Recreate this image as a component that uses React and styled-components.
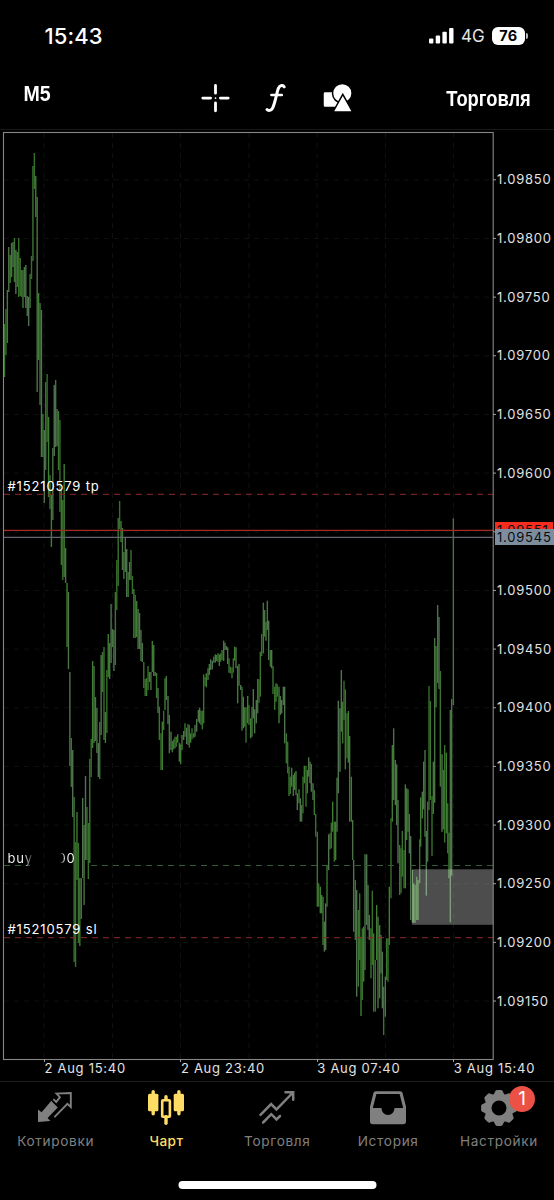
import React from 'react';
import styled, { createGlobalStyle } from 'styled-components';

const Global = createGlobalStyle`
  * { box-sizing: border-box; }
  body { margin: 0; background: #000; }
`;

const Screen = styled.div`
  width: 554px;
  height: 1200px;
  display: flex;
  flex-direction: column;
  overflow: hidden;
  background: #000;
  color: #fff;
  font-family: Inter, "Liberation Sans", sans-serif;
`;

const StatusBar = styled.header`
  height: 70px;
  flex: none;
  display: flex;
  align-items: center;
  justify-content: space-between;
  padding: 1px 26.5px 0 44.5px;
`;

const Clock = styled.span`
  font-size: 22px;
  font-weight: 550;
  letter-spacing: 0.1px;
`;

const StatusIcons = styled.div`
  display: flex;
  align-items: center;
`;

const Network = styled.span`
  margin-left: 7px;
  width: 31px;
  font-size: 17px;
  letter-spacing: 0.1px;
  color: #e4e4e4;
`;

const Battery = styled.span`
  width: 32.5px;
  height: 18px;
  border-radius: 6px;
  background: #fff;
  color: #000;
  font-size: 14.5px;
  line-height: 18px;
  font-weight: 650;
  letter-spacing: 0.2px;
  text-align: center;
`;

const BatteryTip = styled.span`
  width: 2px;
  height: 6px;
  margin-left: 1px;
  border-radius: 0 3px 3px 0;
  background: #bbb;
`;

const Toolbar = styled.nav`
  height: 60px;
  flex: none;
  display: grid;
  grid-template-columns: 200px 154px 1fr;
  border-bottom: 1px solid #181818;
`;

const ToolText = styled.span`
  font-family: "Liberation Sans", sans-serif;
  font-size: 22.5px;
  line-height: 24px;
  font-weight: 700;
  transform: scaleX(${(p) => p.$squeeze});
  transform-origin: ${(p) => p.$from};
  padding: ${(p) => p.$pad};
  justify-self: ${(p) => (p.$from === 'left' ? 'start' : 'end')};
  white-space: nowrap;
`;

const ToolIcons = styled.div`
  display: flex;
  justify-content: space-between;
  align-items: flex-start;
  padding: 13px 1.5px 0 1px;
`;

const ChartArea = styled.main`
  position: relative;
  height: 929px;
  flex: none;
  display: flex;
`;

const PriceColumn = styled.div`
  flex: 1;
  display: flex;
  flex-direction: column;
  padding: 20.4px 0 0 3px;
`;

const Price = styled.span`
  height: 58.66px;
  flex: none;
  line-height: 58.66px;
  font-size: 13px;
  letter-spacing: 0.77px;
  white-space: nowrap;
  visibility: ${(p) => (p.$covered ? 'hidden' : 'visible')};
  color: #e2e2e2;
`;

const PriceTag = styled.span`
  position: absolute;
  left: 494.5px;
  top: ${(p) => p.$top}px;
  width: ${(p) => p.$width}px;
  height: 16px;
  padding-left: 2.5px;
  background: ${(p) => p.$color};
  color: #080b10;
  font-size: 13px;
  line-height: 16px;
  letter-spacing: 0.77px;
`;

const OrderLabel = styled.span`
  position: absolute;
  left: ${(p) => p.$left || 7.5}px;
  top: ${(p) => p.$top}px;
  font-size: 13px;
  line-height: 16px;
  letter-spacing: 0.85px;
  white-space: nowrap;
`;

const FadedText = styled.span`
  background: linear-gradient(90deg, #fff 15px, #333 24px);
  background-clip: text;
  color: transparent;
`;

const FadedTail = styled.span`
  background: linear-gradient(90deg, #000 2px, #fff 7px);
  background-clip: text;
  color: transparent;
`;

const TimeRow = styled.div`
  height: 22px;
  flex: none;
  display: flex;
  padding-left: 44.5px;
`;

const Time = styled.span`
  width: 136.4px;
  flex: none;
  font-size: 13px;
  line-height: 19px;
  letter-spacing: 0.72px;
  color: #e2e2e2;
  white-space: nowrap;
`;

const Tabs = styled.nav`
  height: 92px;
  flex: none;
  display: grid;
  grid-template-columns: repeat(5, 1fr);
  border-top: 1px solid #1c1c1c;
`;

const Tab = styled.div`
  position: relative;
  display: flex;
  flex-direction: column;
  align-items: center;
  padding-top: 8px;
  color: ${(p) => (p.$active ? '#ffdc64' : '#808080')};
`;

const TabLabel = styled.span`
  margin-top: 5px;
  font-size: 13.6px;
  line-height: 20px;
  letter-spacing: ${(p) => p.$spacing}px;
  margin-right: -${(p) => p.$spacing}px;
  font-weight: ${(p) => (p.$active ? 450 : 400)};
`;

const Badge = styled.span`
  position: absolute;
  left: 66px;
  top: 4px;
  width: 26px;
  height: 26px;
  border-radius: 50%;
  background: #eb5144;
  color: #fff;
  font-size: 19px;
  line-height: 26px;
  text-align: center;
`;

const HomeIndicator = styled.div`
  width: 198px;
  height: 8px;
  margin: 8px auto 0;
  transform: translateX(0.5px);
  border-radius: 4px;
  background: #fff;
`;

// Each bar is [high, low] in screen rows; one bar per five minutes.
const BARS = [
  [324,377],[309,355],[290,343],[247,292],[255,283],[243,277],[242,267],[238,282],[250,294],[252,287],
  [238,297],[258,296],[270,297],[270,308],[267,297],[265,308],[296,316],[297,326],[274,308],[256,279],
  [166,261],[153,189],[176,217],[197,392],[293,360],[303,405],[310,457],[414,457],[430,503],[382,470],
  [374,442],[417,497],[475,509],[495,547],[448,520],[385,456],[380,447],[409,446],[411,470],[420,512],
  [490,565],[500,580],[464,577],[548,583],[583,647],[592,669],[672,766],[738,787],[750,817],[797,962],
  [842,967],[812,880],[843,943],[878,946],[878,919],[798,878],[825,905],[776,860],[807,860],[823,879],
  [759,863],[739,777],[661,748],[666,743],[697,741],[708,753],[743,777],[722,779],[655,735],[652,692],
  [647,740],[712,743],[670,733],[634,677],[643,679],[604,663],[629,647],[630,671],[592,665],[560,610],
  [518,586],[501,529],[521,542],[528,570],[552,579],[538,572],[549,597],[572,597],[562,580],[550,580],
  [576,594],[589,638],[595,638],[601,637],[609,649],[613,649],[630,661],[643,662],[662,688],[679,696],
  [678,696],[666,690],[672,682],[672,690],[641,672],[645,676],[672,676],[673,698],[688,713],
];

// [x, high, low] relative to the origin given with each run.
const RUN_MIDDLE = [
  [28,350,450],[33,430,540],[37,395,540],[41,362,420],[45,265,360],[49,258,330],[54,318,402],[58,375,490],
  [63,425,480],[67,453,487],[71,448,478],[75,440,475],[79,440,470],[83,433,458],[88,458,515],[92,463,522],
  [96,435,480],[101,423,450],[105,400,440],[110,413,462],[114,402,465],[118,405,473],[122,430,458],[126,415,448],
  [131,430,443],[135,405,440],[140,387,425],[145,360,395],[149,353,400],[153,362,405],[157,362,418],[161,253,400],
  [165,262,288],[169,250,292],[174,235,270],[178,222,255],[182,208,240],[187,212,238],[191,200,218],[196,193,218],
  [200,195,213],[204,190,215],[208,193,228],[212,190,215],[216,180,210],[221,152,213],[225,158,180],[229,168,180],
  [233,172,222],[237,205,248],[241,230,250],[246,232,265],[250,205,248],[254,170,212],[258,172,235],[263,228,340],
  [267,222,287],[272,285,300],[276,290,422],[280,320,415],[284,352,410],[288,352,458],[293,318,400],[297,345,405],
  [302,385,445],[306,350,440],[310,297,385],[314,358,430],[319,330,400],[323,267,370],[327,268,338],[331,185,320],
  [335,132,198],[340,38,190],[344,60,140],[348,95,152],[352,32,120],[356,92,210],[361,180,230],[365,180,235],
  [369,228,312],[374,290,360],[378,280,335],[382,283,320],[387,290,400],[391,318,375],[395,330,370],[400,290,345],
  [404,290,460],[409,430,520],[413,455,550],[417,530,618],[421,560,612],[425,533,590],[430,555,618],[434,548,600],
  [438,543,615],[442,610,660],[447,598,640],[451,625,695],[455,645,695],[459,560,670],[463,527,580],[468,527,650],
  [472,540,610],[476,502,560],[480,515,580],[484,522,605],[489,580,630],[493,600,675],[497,672,740],
].map(([x, h, l]) => [150 + x / 3, 590 + h / 3, 590 + l / 3]);

const RUN_LATE = [
  [82,545,770],[86,700,770],[91,710,790],[95,735,790],[99,740,885],[103,815,905],[107,760,900],[111,645,770],
  [116,553,660],[120,550,598],[124,518,595],[128,455,545],[133,515,635],[137,515,630],[141,383,545],[145,152,430],
  [150,175,365],[154,60,245],[158,155,280],[162,92,210],[166,118,358],[171,190,325],[175,183,338],[179,258,515],
  [184,380,515],[188,510,630],[191,630,845],[196,690,870],[200,720,1040],[205,780,1010],[209,730,930],[213,860,1098],
  [217,835,1050],[221,830,995],[225,613,960],[230,613,825],[234,705,840],[238,795,870],[243,835,985],[247,722,945],
  [251,850,1085],[256,930,1085],[260,765,930],[264,800,1075],[269,825,1045],[273,855,970],[277,905,1075],[281,1010,1155],
  [286,980,1100],[290,865,990],[294,865,995],[298,710,885],[303,505,745],[307,285,515],[311,235,450],[316,330,465],
  [320,343,525],[324,450,640],[329,585,735],[333,595,730],[337,543,680],[342,600,715],[346,403,715],[350,415,570],
  [354,418,545],[358,492,610],
].map(([x, h, l]) => [290 + x / 3, 650 + h / 3, 650 + l / 3]);

const RUN_LAST = [
  [122,408,660],[127,510,668],[131,550,668],[135,555,668],[140,530,660],[144,540,660],[149,418,550],[152,292,440],
  [157,275,355],[161,185,328],[165,150,410],[169,393,587],[173,305,485],[177,-42,330],[181,3,300],[186,288,468],
  [190,185,342],[194,-186,308],[198,-162,22],[203,-285,-51],[207,-249,-33],[211,-87,260],[216,163,395],[220,210,388],
  [224,135,428],[229,158,400],[233,310,460],[237,398,535],[241,30,667],[245,-3,527],[250,-545,15],
].map(([x, h, l]) => [370 + x / 3, 700 + h / 3, 700 + l / 3]);

const ALL_BARS = [
  ...BARS.map(([h, l], i) => [4.5 + i * 1.4213, h, l]),
  ...RUN_MIDDLE,
  ...RUN_LATE,
  ...RUN_LAST,
];

const GREENS = ['#3b7531', '#4b7444', '#37702a', '#507451', '#3e7d33'];
const GRID_X = [44, 112.5, 180.5, 249, 317, 385.5, 453.5];
const PRICES = Array.from({ length: 15 }, (_, i) => (1.0985 - i * 0.0005).toFixed(5));
const rowY = (i) => 179.8 + i * 58.66;

function PriceChart() {
  return (
    <svg width="494" height="932" viewBox="0 130 494 932" style={{ flex: 'none', overflow: 'visible' }}>
      <g stroke="#0e110e" strokeDasharray="5 5">
        {GRID_X.map((x) => <line key={x} x1={x} x2={x} y1="133" y2="1059" />)}
        {PRICES.map((p, i) => <line key={p} x1="4" x2="493" y1={rowY(i)} y2={rowY(i)} />)}
      </g>
      <g strokeWidth="1.4">
        {ALL_BARS.map(([x, h, l], i) => (
          <line key={i} x1={x} x2={x} y1={h} y2={l} stroke={GREENS[(i * 7 + (i >> 2)) % 5]} />
        ))}
      </g>
      <line x1="4" x2="493" y1="494.3" y2="494.3" stroke="#8b2a29" strokeDasharray="6 5" />
      <line x1="4" x2="493" y1="530.3" y2="530.3" stroke="#a52925" strokeWidth="1.2" />
      <line x1="4" x2="493" y1="537.4" y2="537.4" stroke="#67656f" strokeWidth="1.2" />
      <path d="M4 865.5H30M91 865.5H493" stroke="#2f5c30" strokeDasharray="6 5" />
      <line x1="4" x2="493" y1="937.7" y2="937.7" stroke="#8b2a29" strokeDasharray="6 5" />
      <rect x="412" y="869.3" width="81" height="55.5" fill="#fff" fillOpacity=".3" />
      <rect x="3.5" y="132.5" width="489.7" height="927" fill="none" stroke="#868686" strokeWidth="1.1" />
      <g stroke="#a0a0a0">
        {PRICES.map((p, i) => <line key={p} x1="493" x2="496" y1={rowY(i)} y2={rowY(i)} />)}
        {[44.5, 180.5, 317.5, 453.5].map((x) => <line key={x} x1={x} x2={x} y1="1059" y2="1062" />)}
      </g>
    </svg>
  );
}

const SignalIcon = () => (
  <svg width="25" height="18" viewBox="0 0 25 18" fill="#fff">
    <rect x="0" y="11.5" width="4.4" height="5" rx="1" />
    <rect x="6.7" y="8.5" width="4.4" height="8" rx="1" />
    <rect x="13.4" y="4.8" width="4.4" height="11.7" rx="1" />
    <rect x="20.1" y="1" width="4.4" height="15.5" rx="1" />
  </svg>
);

const CrosshairIcon = () => (
  <svg width="29" height="30" viewBox="0 0 29 30" stroke="#fff" strokeWidth="2.8" strokeLinecap="round">
    <path d="M14.5 2.4V10.2M14.5 20V27.8M1.8 15.1H9.6M19.4 15.1H27.2" />
    <path d="M14.5 15.1V15.11" strokeWidth="1.8" />
  </svg>
);

const FunctionIcon = () => (
  <svg width="24" height="30" viewBox="0 0 24 30" fill="none" stroke="#fff" strokeLinecap="round">
    <path d="M20.2 3.8C19.1 1.6 15.8 2 14.5 5.1C12.5 10 11.1 20.6 8.5 25.2C7.1 27.7 4.3 28 3 26.6" strokeWidth="3" />
    <path d="M7.4 12H17.8" strokeWidth="2.5" />
  </svg>
);

const ShapesIcon = () => (
  <svg width="30" height="30" viewBox="0 0 30 30" fill="#fff" stroke="#000" strokeWidth="1.5">
    <rect x="0" y="8.6" width="16" height="16" rx="2" />
    <circle cx="19.3" cy="10.2" r="9.8" />
    <path d="M19.8 11.4L29.6 28.9H10Z" />
  </svg>
);

const QuotesIcon = () => (
  <svg width="36" height="36" viewBox="0 0 36 36">
    <path d="M1 32.1V19.4L4.6 22.2L14.4 10.8L21 17.3L10.6 27.9L13.4 31Z" fill="currentColor" />
    <path d="M22.2 17.8L15.6 11.3" stroke="#000" strokeWidth="1.6" />
    <path d="M16.4 9.2L19.2 12L22.9 7.2L19.5 3.6L33.8 3V17L30.4 13.8L17.4 27.2" fill="none" stroke="currentColor" strokeWidth="1.9" />
  </svg>
);

const CandlesIcon = () => (
  <svg width="36" height="36" viewBox="0 0 36 36" fill="currentColor">
    <rect x="0" y="3.8" width="10.4" height="17.4" rx="1.5" />
    <rect x="3.5" y="0" width="3.4" height="25.5" rx="1.7" />
    <rect x="25.7" y="3.8" width="10.3" height="17.4" rx="1.5" />
    <rect x="29.2" y="0" width="3.4" height="25.5" rx="1.7" />
    <rect x="16.3" y="5" width="3.4" height="6" rx="1.7" />
    <rect x="16.3" y="25" width="3.4" height="10" rx="1.7" />
    <rect x="14.2" y="10.2" width="7.7" height="16.6" rx=".8" fill="none" stroke="currentColor" strokeWidth="2.6" />
  </svg>
);

const TradeIcon = () => (
  <svg width="36" height="36" viewBox="0 0 36 36" fill="none" stroke="currentColor" strokeWidth="2.5" strokeLinecap="round" strokeLinejoin="miter">
    <path d="M1.5 24.8L12.1 14L17.5 19.4L34 2.5M26.5 2.2H34.2V9.8" />
    <path d="M4.1 32.5L12.3 24.2L17.5 29.5L21 26" />
  </svg>
);

const HistoryIcon = () => (
  <svg width="36" height="36" viewBox="0 0 36 36">
    <path
      d="M5.6 1.3H30.4Q32 1.3 32.5 2.8L36 16.7V31.5Q36 34.3 33.2 34.3H2.8Q0 34.3 0 31.5V16.7L3.5 2.8Q4 1.3 5.6 1.3ZM6.4 4L2.8 18.1H11.4Q12.2 25 18 25Q23.8 25 24.6 18.1H33.2L29.6 4Z"
      fill="currentColor"
      fillRule="evenodd"
    />
  </svg>
);

const TEETH = [0, 45, 90, 135, 180, 225, 270, 315];
const GearIcon = () => (
  <svg width="36" height="36" viewBox="0 0 36 36" fill="currentColor">
    {TEETH.map((a) => (
      <path key={a} transform={`rotate(${a} 18 18)`} d="M12 6L14.3 1.2Q14.8 .1 16 .1H20Q21.2 .1 21.7 1.2L24 6Z" />
    ))}
    <circle cx="18" cy="18" r="11" fill="none" stroke="currentColor" strokeWidth="7" />
  </svg>
);

const TABS = [
  { label: 'Котировки', Icon: QuotesIcon, spacing: 0.68 },
  { label: 'Чарт', Icon: CandlesIcon, active: true, spacing: 0.45 },
  { label: 'Торговля', Icon: TradeIcon, spacing: 0.68 },
  { label: 'История', Icon: HistoryIcon, spacing: 0.68 },
  { label: 'Настройки', Icon: GearIcon, badge: '1', spacing: 0.68 },
];

export default function App() {
  return (
    <>
      <Global />
      <Screen>
        <StatusBar>
          <Clock>15:43</Clock>
          <StatusIcons>
            <SignalIcon />
            <Network>4G</Network>
            <Battery>76</Battery>
            <BatteryTip />
          </StatusIcons>
        </StatusBar>
        <Toolbar>
          <ToolText $squeeze={0.87} $from="left" $pad="12px 0 0 27px">M5</ToolText>
          <ToolIcons>
            <CrosshairIcon />
            <FunctionIcon />
            <ShapesIcon />
          </ToolIcons>
          <ToolText $squeeze={0.815} $from="right" $pad="17px 28px 0 0">Торговля</ToolText>
        </Toolbar>
        <ChartArea>
          <PriceChart />
          <PriceColumn>
            {PRICES.map((p) => <Price key={p} $covered={p === '1.09550'}>{p}</Price>)}
          </PriceColumn>
          <OrderLabel $top={348}>#15210579 tp</OrderLabel>
          <OrderLabel $top={720}><FadedText>buy</FadedText></OrderLabel>
          <OrderLabel $top={720} $left={57.5}><FadedTail>00</FadedTail></OrderLabel>
          <OrderLabel $top={791}>#15210579 sl</OrderLabel>
          <PriceTag $top={392} $width={58.5} $color="#f52d1f">1.09551</PriceTag>
          <PriceTag $top={399} $width={59.5} $color="#7d8d9e">1.09545</PriceTag>
        </ChartArea>
        <TimeRow>
          {['2 Aug 15:40', '2 Aug 23:40', '3 Aug 07:40', '3 Aug 15:40'].map((t) => <Time key={t}>{t}</Time>)}
        </TimeRow>
        <Tabs>
          {TABS.map(({ label, Icon, active, badge, spacing }) => (
            <Tab key={label} $active={active}>
              <Icon />
              {badge && <Badge>{badge}</Badge>}
              <TabLabel $active={active} $spacing={spacing}>{label}</TabLabel>
            </Tab>
          ))}
        </Tabs>
        <HomeIndicator />
      </Screen>
    </>
  );
}
